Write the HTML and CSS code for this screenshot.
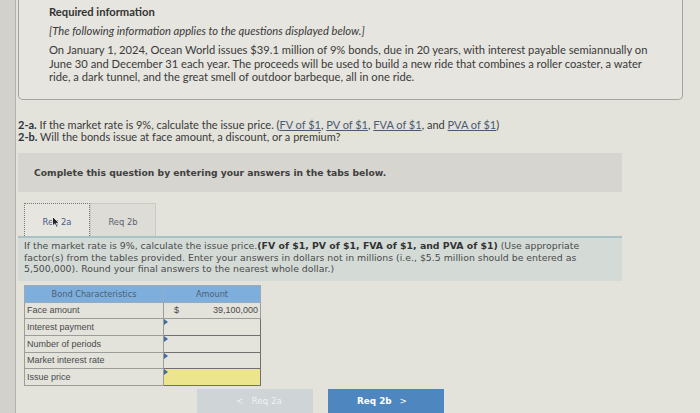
FILE: index.html
```html
<!DOCTYPE html>
<html>
<head>
<meta charset="utf-8">
<link rel="stylesheet" href="styles.css">
</head>
<body>
<div class="page">
  <div class="rail"></div>
  <div class="main">
    <div class="info-box">
      <div class="info-title">Required information</div>
      <div class="info-note">[The following information applies to the questions displayed below.]</div>
      <p class="info-text">On January 1, 2024, Ocean World issues $39.1 million of 9% bonds, due in 20 years, with interest payable semiannually on June 30 and December 31 each year. The proceeds will be used to build a new ride that combines a roller coaster, a water ride, a dark tunnel, and the great smell of outdoor barbeque, all in one ride.</p>
    </div>

    <div class="questions">
      <div><b>2-a.</b> If the market rate is 9%, calculate the issue price. (<a>FV of $1</a>, <a>PV of $1</a>, <a>FVA of $1</a>, and <a>PVA of $1</a>)</div>
      <div><b>2-b.</b> Will the bonds issue at face amount, a discount, or a premium?</div>
    </div>

    <div class="complete-box">Complete this question by entering your answers in the tabs below.</div>

    <div class="tabs">
      <div class="tab active">Req 2a
        <svg class="cursor" width="8" height="12" viewBox="0 0 8 12"><path d="M0.5 0.5 L0.5 10 L2.8 7.8 L4.4 11.3 L5.8 10.7 L4.2 7.3 L7.3 7.3 Z" fill="#222" stroke="#fff" stroke-width="0.8"/></svg>
      </div>
      <div class="tab">Req 2b</div>
    </div>

    <div class="instr">If the market rate is 9%, calculate the issue price.<b>(FV of $1, PV of $1, FVA of $1, and PVA of $1)</b> (Use appropriate factor(s) from the tables provided. Enter your answers in dollars not in millions (i.e., $5.5 million should be entered as 5,500,000). Round your final answers to the nearest whole dollar.)</div>

    <table class="bonds">
      <tr><th class="c1">Bond Characteristics</th><th class="c2">Amount</th></tr>
      <tr><td class="c1">Face amount</td><td class="c2 given"><span class="dollar">$</span><span class="num">39,100,000</span></td></tr>
      <tr><td class="c1">Interest payment</td><td class="c2 inp"><span class="mark"></span></td></tr>
      <tr><td class="c1">Number of periods</td><td class="c2 inp"><span class="mark"></span></td></tr>
      <tr><td class="c1">Market interest rate</td><td class="c2 inp"><span class="mark"></span></td></tr>
      <tr><td class="c1">Issue price</td><td class="c2 inp yellow"><span class="mark"></span></td></tr>
    </table>

    <div class="nav">
      <div class="btn prev"><span class="chev">&lt;</span> Req 2a</div>
      <div class="btn next">Req 2b <span class="chev">&gt;</span></div>
    </div>
  </div>
</div>
</body>
</html>
```

FILE: styles.css
```css
html, body {
  margin: 0;
  padding: 0;
  height: 100%;
  overflow: hidden;
}
body {
  background: #e3e2db;
  color: #3b3b3b;
}
.page {
  display: flex;
  height: 413px;
}
.rail {
  width: 15px;
  flex: none;
  background: #d2d1cc;
  border-right: 1px solid #b3b3ae;
}
.main {
  flex: 1;
  padding-left: 2px;
  position: relative;
}
.info-box {
  width: 603px;
  margin-top: -1px;
  height: 88px;
  padding: 6px 30px 6px 30px;
  border: 1px solid #a3a3a0;
  border-top: none;
  border-radius: 0 0 5px 5px;
  background: #e6e5df;
  font-family: Lato, "Open Sans", sans-serif;
  font-size: 11.2px;
  color: #3a3a3a;
}
.info-title {
  font-weight: bold;
  color: #333;
  line-height: 14px;
}
.info-note {
  font-style: italic;
  margin-top: 5px;
  line-height: 14px;
}
.info-text {
  margin: 5px 0 0 0;
  line-height: 13.5px;
}
.questions {
  margin-top: 19px;
  font-family: Lato, "Open Sans", sans-serif;
  font-size: 11px;
  line-height: 12px;
  color: #3a3a3a;
}
.questions b {
  color: #2a3340;
}
.questions a {
  color: #4a5a70;
  text-decoration: underline;
}
.complete-box {
  margin-top: 10px;
  width: 604px;
  height: 39px;
  box-sizing: border-box;
  padding: 14px 0 0 16px;
  background: #d6d5cf;
  font-family: "DejaVu Sans", Verdana, sans-serif;
  font-weight: bold;
  font-size: 9.2px;
  color: #3f3f3f;
}
.tabs {
  display: flex;
  margin-top: 11px;
  margin-left: 6px;
  height: 33px;
}
.tab {
  width: 66px;
  height: 33px;
  box-sizing: border-box;
  padding-top: 3px;
  border: 1px solid #cacac5;
  border-bottom: none;
  background: #dedcd6;
  font-family: "DejaVu Sans", Verdana, sans-serif;
  font-size: 8.4px;
  color: #5a6270;
  display: flex;
  align-items: center;
  justify-content: center;
  position: relative;
}
.tab.active {
  background: #e6e5df;
  border: 1px dotted #777;
  border-bottom: none;
  color: #4a5a8a;
}
.cursor {
  position: absolute;
  left: 27px;
  top: 12px;
}
.instr {
  width: 604px;
  box-sizing: border-box;
  padding: 2px 30px 6px 6px;
  background: #d4dbd7;
  border-top: 2px solid #a9c3c4;
  font-family: "DejaVu Sans", Verdana, sans-serif;
  font-size: 9.35px;
  line-height: 11.5px;
  color: #4a4a4a;
}
.instr b {
  color: #333;
}
.bonds {
  margin-top: 4px;
  margin-left: 6px;
  border-collapse: collapse;
  font-family: "Liberation Sans", Arial, sans-serif;
  font-size: 9px;
  color: #4a4a4a;
}
.bonds th {
  background: #7eaedc;
  height: 16px;
  padding: 0;
  font-family: "DejaVu Sans", Verdana, sans-serif;
  font-weight: normal;
  font-size: 8.2px;
  color: #4d5f75;
  border: 1px solid #9ab;
}
.bonds td {
  height: 15.7px;
  padding: 0 2px;
  border: 1px solid #9c9c98;
}
.bonds .c1 {
  width: 134px;
  text-align: left;
}
.bonds th.c1 {
  text-align: center;
}
.bonds .c2 {
  width: 92px;
}
.given .dollar {
  margin-left: 8px;
}
.given .num {
  float: right;
}
.inp {
  position: relative;
  border: 1.5px solid #6f7070 !important;
  background: #e4e3dc;
}
.inp.yellow {
  background: #ece58d;
}
.mark {
  position: absolute;
  left: 0;
  top: 0;
  width: 0;
  height: 0;
  border-top: 3px solid transparent;
  border-bottom: 3px solid transparent;
  border-left: 4px solid #3f6e9e;
}
.nav {
  display: flex;
  gap: 15px;
  margin-top: 3px;
  margin-left: 179px;
}
.btn {
  width: 116px;
  height: 25px;
  box-sizing: border-box;
  display: flex;
  align-items: center;
  justify-content: center;
  font-family: "DejaVu Sans", Verdana, sans-serif;
  font-size: 8.8px;
}
.btn.prev {
  background: #cfd4d7;
  color: #eef0f2;
}
.btn.next {
  background: #4e87c0;
  color: #ffffff;
  font-weight: bold;
}
.chev {
  font-weight: normal;
  margin: 0 8px;
}
```
